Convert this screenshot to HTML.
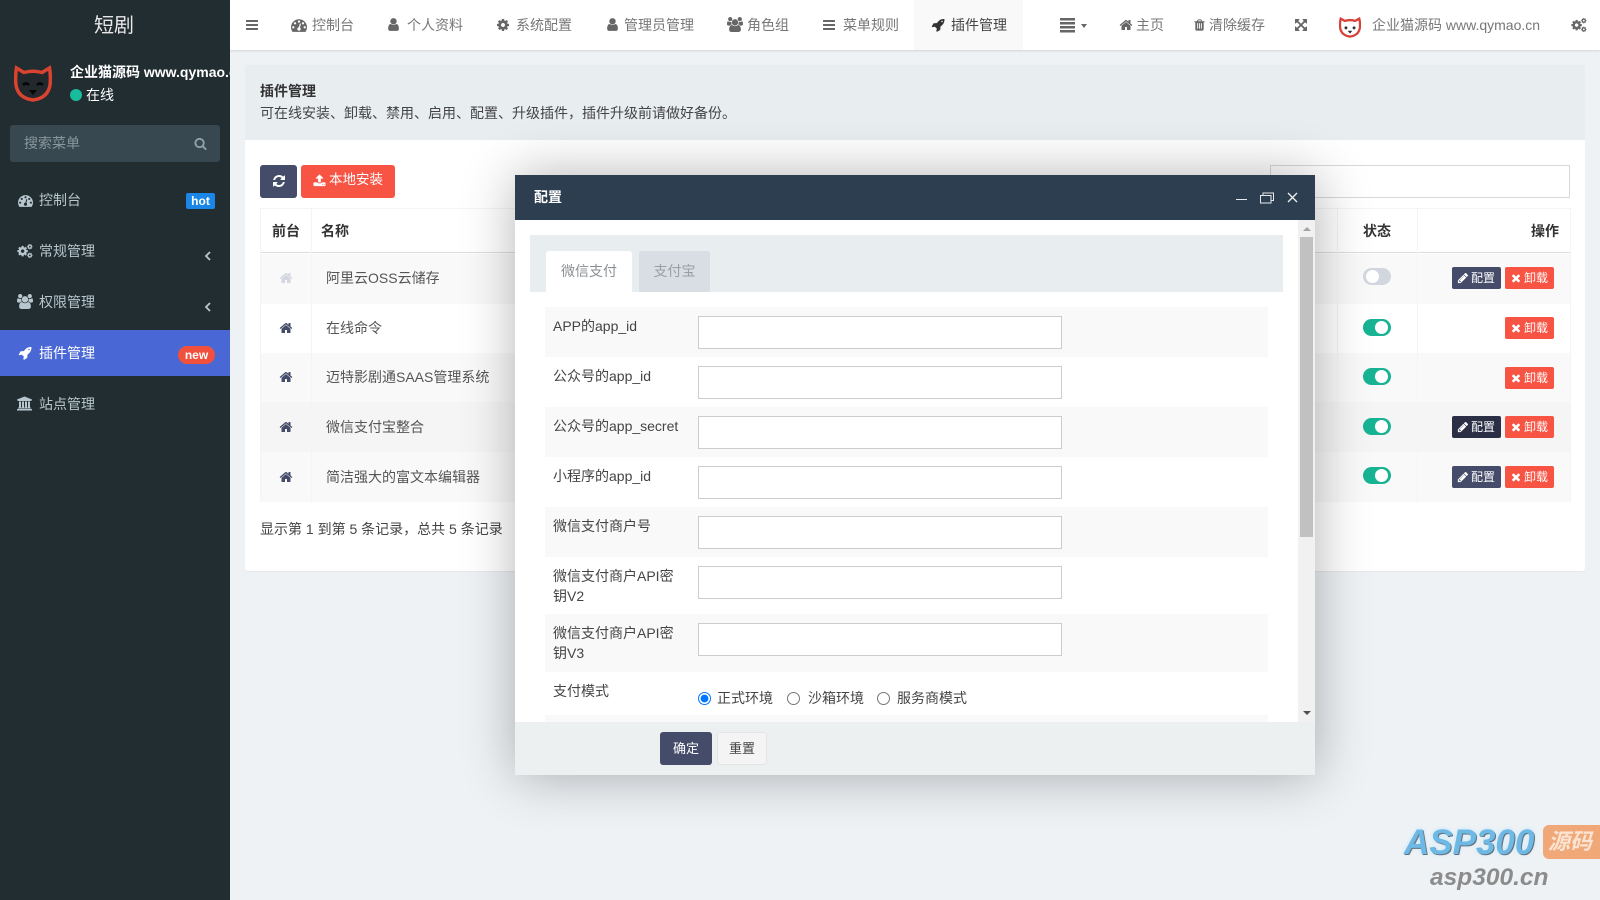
<!DOCTYPE html>
<html lang="zh-CN"><head><meta charset="utf-8"><title>插件管理</title>
<style>
html,body{margin:0;padding:0;width:1600px;height:900px;overflow:hidden;background:#eef2f5}
body{position:relative;font:14px/20px "Liberation Sans","Noto Sans CJK SC",sans-serif;color:#444}
.a{position:absolute}
.t{position:absolute;white-space:nowrap;line-height:20px}
svg.i{position:absolute;fill:currentColor;display:block}
.nav{color:#777}
.side{color:#b8c7ce}
.row{position:absolute;left:260px;width:1310px}
.hl{background:#f9f9f9}
.vl{position:absolute;width:1px;background:#f4f4f4}
.btn{position:absolute;height:22px;width:49px;border-radius:2px;color:#fff;font-size:12px;line-height:22px;white-space:nowrap}
.btn svg{position:absolute}
.btn span{position:absolute;left:19px;top:0}
.cfg{background:#444c69;left:1452px}
.del{background:#f75444;left:1505px}
.sw{position:absolute;left:1363px;width:28px;height:17px;border-radius:9px;background:#18b393}
.sw:after{content:"";position:absolute;left:12px;top:2px;width:13px;height:13px;border-radius:50%;background:#fff}
.sw.off{background:#d2d6de}
.sw.off:after{left:3px}
.fr{position:absolute;left:30px;width:723px}
.fr.s{background:#f9f9f9}
.lb{position:absolute;left:8px;width:130px;line-height:20px;color:#444}
input.tx{position:absolute;left:153px;width:364px;height:33px;box-sizing:border-box;border:1px solid #ccc;background:#fff;margin:0;padding:0;border-radius:0}
input[type=radio]{position:absolute;margin:0;width:13px;height:13px}
</style></head><body>
<svg width="0" height="0" style="position:absolute">
<defs>
<symbol id="home" viewBox="0 0 1792 1792"><path d="M1472 992v480q0 26-19 45t-45 19h-384v-384h-256v384h-384q-26 0-45-19t-19-45v-480q0-1 .5-3t.5-3l575-474 575 474q1 2 1 6zm223-69l-62 74q-8 9-21 11h-3q-13 0-21-7l-692-577-692 577q-12 8-24 7-13-2-21-11l-62-74q-8-10-7-23.500t11-21.500l719-599q32-26 76-26t76 26l244 204v-195q0-14 9-23t23-9h192q14 0 23 9t9 23v408l219 182q10 8 11 21.500t-7 23.500z"/></symbol>
<symbol id="bars" viewBox="0 0 1792 1792"><path d="M1664 1344v128q0 26-19 45t-45 19h-1408q-26 0-45-19t-19-45v-128q0-26 19-45t45-19h1408q26 0 45 19t19 45zm0-512v128q0 26-19 45t-45 19h-1408q-26 0-45-19t-19-45v-128q0-26 19-45t45-19h1408q26 0 45 19t19 45zm0-512v128q0 26-19 45t-45 19h-1408q-26 0-45-19t-19-45v-128q0-26 19-45t45-19h1408q26 0 45 19t19 45z"/></symbol>
<symbol id="user" viewBox="0 0 1792 1792"><path d="M1536 1399q0 109-62.500 187t-150.500 78h-854q-88 0-150.500-78t-62.500-187q0-85 8.500-160.500t31.500-152 58.500-131 94-89 134.500-34.500q131 128 313 128t313-128q76 0 134.500 34.500t94 89 58.500 131 31.500 152 8.500 160.500zm-256-887q0 159-112.500 271.500t-271.500 112.500-271.500-112.500-112.500-271.500 112.500-271.500 271.500-112.500 271.500 112.500 112.500 271.500z"/></symbol>
<symbol id="rocket" viewBox="0 0 1792 1792"><path d="M1504 448q0-40-28-68t-68-28-68 28-28 68 28 68 68 28 68-28 28-68zm224-288q0 249-75.500 430.500t-253.500 360.500q-81 80-195 176l-20 379q-2 16-16 26l-384 224q-7 4-16 4-12 0-23-9l-64-64q-13-14-8-32l85-276-281-281-276 85q-3 1-9 1-14 0-23-9l-64-64q-17-19-5-39l224-384q10-14 26-16l379-20q96-114 176-195 188-187 358-258t431-71q14 0 24 9.500t10 22.500z"/></symbol>
<symbol id="search" viewBox="0 0 1792 1792"><path d="M1216 832q0-185-131.500-316.500t-316.500-131.500-316.500 131.500-131.500 316.500 131.500 316.500 316.500 131.500 316.500-131.500 131.500-316.500zm512 832q0 52-38 90t-90 38q-54 0-90-38l-343-342q-179 124-399 124-143 0-273.500-55.500t-225-150-150-225-55.500-273.500 55.500-273.500 150-225 225-150 273.500-55.500 273.500 55.500 225 150 150 225 55.500 273.500q0 220-124 399l343 343q37 37 37 90z"/></symbol>
<symbol id="pencil" viewBox="0 0 1792 1792"><path d="M491 1536l91-91-235-235-91 91v107h128v128h107zm523-928q0-22-22-22-10 0-17 7l-542 542q-7 7-7 17 0 22 22 22 10 0 17-7l542-542q7-7 7-17zm-54-192l416 416-832 832h-416v-416zm683 96q0 53-37 90l-166 166-416-416 166-165q36-38 90-38 53 0 91 38l235 234q37 39 37 91z"/></symbol>
<symbol id="times" viewBox="0 0 1792 1792"><path d="M1490 1322q0 40-28 68l-136 136q-28 28-68 28t-68-28l-294-294-294 294q-28 28-68 28t-68-28l-136-136q-28-28-28-68t28-68l294-294-294-294q-28-28-28-68t28-68l136-136q28-28 68-28t68 28l294 294 294-294q28-28 68-28t68 28l136 136q28 28 28 68t-28 68l-294 294 294 294q28 28 28 68z"/></symbol>
<symbol id="trash" viewBox="0 0 1792 1792"><path d="M704 1376v-704q0-14-9-23t-23-9h-64q-14 0-23 9t-9 23v704q0 14 9 23t23 9h64q14 0 23-9t9-23zm256 0v-704q0-14-9-23t-23-9h-64q-14 0-23 9t-9 23v704q0 14 9 23t23 9h64q14 0 23-9t9-23zm256 0v-704q0-14-9-23t-23-9h-64q-14 0-23 9t-9 23v704q0 14 9 23t23 9h64q14 0 23-9t9-23zm-544-992h448l-48-117q-7-9-17-11h-317q-10 2-17 11zm928 32v64q0 14-9 23t-23 9h-96v948q0 83-47 143.500t-113 60.500h-832q-66 0-113-58.500t-47-141.500v-952h-96q-14 0-23-9t-9-23v-64q0-14 9-23t23-9h309l70-167q15-37 54-63t79-26h320q40 0 79 26t54 63l70 167h309q14 0 23 9t9 23z"/></symbol>
<symbol id="upload" viewBox="0 0 1792 1792"><path d="M1344 1472q0-26-19-45t-45-19-45 19-19 45 19 45 45 19 45-19 19-45zm256 0q0-26-19-45t-45-19-45 19-19 45 19 45 45 19 45-19 19-45zm128-224v320q0 40-28 68t-68 28h-1472q-40 0-68-28t-28-68v-320q0-40 28-68t68-28h427q21 56 70.500 92t110.500 36h256q61 0 110.500-36t70.500-92h427q40 0 68 28t28 68zm-325-648q-17 40-59 40h-256v448q0 26-19 45t-45 19h-256q-26 0-45-19t-19-45v-448h-256q-42 0-59-40-17-39 14-69l448-448q18-19 45-19t45 19l448 448q31 30 14 69z"/></symbol>
<symbol id="refresh" viewBox="0 0 1792 1792"><path d="M1639 1056q0 5-1 7-64 268-268 434.500t-478 166.500q-146 0-282.500-55t-243.500-157l-129 129q-19 19-45 19t-45-19-19-45v-448q0-26 19-45t45-19h448q26 0 45 19t19 45-19 45l-137 137q71 66 161 102t187 36q134 0 250-65t186-179q11-17 53-117 8-23 30-23h192q13 0 22.500 9.500t9.500 22.500zm25-800v448q0 26-19 45t-45 19h-448q-26 0-45-19t-19-45 19-45l138-138q-148-137-349-137-134 0-250 65t-186 179q-11 17-53 117-8 23-30 23h-199q-13 0-22.500-9.500t-9.500-22.500v-7q65-268 270-434.500t480-166.500q146 0 284 55.500t245 156.500l130-129q19-19 45-19t45 19 19 45z"/></symbol>
<symbol id="cog" viewBox="0 0 1792 1792"><path d="M1152 896q0-106-75-181t-181-75-181 75-75 181 75 181 181 75 181-75 75-181zm512-109v222q0 12-8 23t-20 13l-185 28q-19 54-39 91 35 50 107 138 10 12 10 25t-9 23q-27 37-99 108t-94 71q-12 0-26-9l-138-108q-44 23-91 38-16 136-29 186-7 28-36 28h-222q-14 0-24.500-8.500t-11.500-21.500l-28-184q-49-16-90-37l-141 107q-10 9-25 9-14 0-25-11-126-114-165-168-7-10-7-23 0-12 8-23 15-21 51-66.500t54-70.500q-27-50-41-99l-183-27q-13-2-21-12.500t-8-23.500v-222q0-12 8-23t19-13l186-28q14-46 39-92-40-57-107-138-10-12-10-24 0-10 9-23 26-36 98.500-107.500t94.500-71.500q13 0 26 10l138 107q44-23 91-38 16-136 29-186 7-28 36-28h222q14 0 24.500 8.500t11.500 21.500l28 184q49 16 90 37l142-107q9-9 24-9 13 0 25 10 129 119 165 170 7 8 7 22 0 12-8 23-15 21-51 66.500t-54 70.500q26 50 41 98l183 28q13 2 21 12.500t8 23.500z"/></symbol>
<symbol id="cogs" viewBox="0 0 1920 1792"><g transform="translate(-60 180) scale(.82)"><path d="M1152 896q0-106-75-181t-181-75-181 75-75 181 75 181 181 75 181-75 75-181zm512-109v222q0 12-8 23t-20 13l-185 28q-19 54-39 91 35 50 107 138 10 12 10 25t-9 23q-27 37-99 108t-94 71q-12 0-26-9l-138-108q-44 23-91 38-16 136-29 186-7 28-36 28h-222q-14 0-24.500-8.500t-11.500-21.500l-28-184q-49-16-90-37l-141 107q-10 9-25 9-14 0-25-11-126-114-165-168-7-10-7-23 0-12 8-23 15-21 51-66.500t54-70.500q-27-50-41-99l-183-27q-13-2-21-12.500t-8-23.500v-222q0-12 8-23t19-13l186-28q14-46 39-92-40-57-107-138-10-12-10-24 0-10 9-23 26-36 98.500-107.500t94.500-71.500q13 0 26 10l138 107q44-23 91-38 16-136 29-186 7-28 36-28h222q14 0 24.500 8.500t11.500 21.500l28 184q49 16 90 37l142-107q9-9 24-9 13 0 25 10 129 119 165 170 7 8 7 22 0 12-8 23-15 21-51 66.500t-54 70.500q26 50 41 98l183 28q13 2 21 12.500t8 23.500z"/></g><g transform="translate(1160 0) scale(.42)"><path d="M1152 896q0-106-75-181t-181-75-181 75-75 181 75 181 181 75 181-75 75-181zm512-109v222q0 12-8 23t-20 13l-185 28q-19 54-39 91 35 50 107 138 10 12 10 25t-9 23q-27 37-99 108t-94 71q-12 0-26-9l-138-108q-44 23-91 38-16 136-29 186-7 28-36 28h-222q-14 0-24.500-8.500t-11.500-21.500l-28-184q-49-16-90-37l-141 107q-10 9-25 9-14 0-25-11-126-114-165-168-7-10-7-23 0-12 8-23 15-21 51-66.500t54-70.500q-27-50-41-99l-183-27q-13-2-21-12.500t-8-23.500v-222q0-12 8-23t19-13l186-28q14-46 39-92-40-57-107-138-10-12-10-24 0-10 9-23 26-36 98.500-107.500t94.500-71.500q13 0 26 10l138 107q44-23 91-38 16-136 29-186 7-28 36-28h222q14 0 24.500 8.500t11.500 21.500l28 184q49 16 90 37l142-107q9-9 24-9 13 0 25 10 129 119 165 170 7 8 7 22 0 12-8 23-15 21-51 66.500t-54 70.500q26 50 41 98l183 28q13 2 21 12.500t8 23.500z"/></g><g transform="translate(1160 1040) scale(.42)"><path d="M1152 896q0-106-75-181t-181-75-181 75-75 181 75 181 181 75 181-75 75-181zm512-109v222q0 12-8 23t-20 13l-185 28q-19 54-39 91 35 50 107 138 10 12 10 25t-9 23q-27 37-99 108t-94 71q-12 0-26-9l-138-108q-44 23-91 38-16 136-29 186-7 28-36 28h-222q-14 0-24.500-8.500t-11.500-21.500l-28-184q-49-16-90-37l-141 107q-10 9-25 9-14 0-25-11-126-114-165-168-7-10-7-23 0-12 8-23 15-21 51-66.500t54-70.500q-27-50-41-99l-183-27q-13-2-21-12.500t-8-23.500v-222q0-12 8-23t19-13l186-28q14-46 39-92-40-57-107-138-10-12-10-24 0-10 9-23 26-36 98.500-107.500t94.500-71.500q13 0 26 10l138 107q44-23 91-38 16-136 29-186 7-28 36-28h222q14 0 24.500 8.500t11.500 21.500l28 184q49 16 90 37l142-107q9-9 24-9 13 0 25 10 129 119 165 170 7 8 7 22 0 12-8 23-15 21-51 66.500t-54 70.500q26 50 41 98l183 28q13 2 21 12.500t8 23.500z"/></g></symbol>
<symbol id="users" viewBox="0 0 1920 1792"><path d="M593 896q-162 5-265 128h-134q-82 0-138-40.500t-56-118.500q0-353 124-353 6 0 43.500 21t97.500 42.500 119 21.500q67 0 133-23-5 37-5 66 0 139 81 256zm1071 637q0 120-73 189.500t-194 69.500h-874q-121 0-194-69.500t-73-189.500q0-53 3.500-103.500t14-109 26.500-108.500 43-97.500 62-81 85.500-53.500 111.500-20q10 0 43 21.500t73 48 107 48 135 21.500 135-21.500 107-48 73-48 43-21.500q61 0 111.500 20t85.500 53.500 62 81 43 97.500 26.500 108.500 14 109 3.500 103.500zm-1024-1277q0 106-75 181t-181 75-181-75-75-181 75-181 181-75 181 75 75 181zm704 384q0 159-112.500 271.500t-271.500 112.500-271.500-112.500-112.500-271.500 112.500-271.500 271.500-112.500 271.500 112.500 112.500 271.500zm576 225q0 78-56 118.500t-138 40.500h-134q-103-123-265-128 81-117 81-256 0-29-5-66 66 23 133 23 59 0 119-21.500t97.500-42.500 43.500-21q124 0 124 353zm-128-609q0 106-75 181t-181 75-181-75-75-181 75-181 181-75 181 75 75 181z"/></symbol>
<symbol id="dash" viewBox="0 0 1792 1792"><path d="M384 1152q0-53-37.500-90.500t-90.500-37.500-90.500 37.500-37.500 90.500 37.500 90.500 90.500 37.500 90.500-37.500 37.500-90.500zm192-448q0-53-37.500-90.500t-90.500-37.500-90.500 37.500-37.500 90.500 37.500 90.500 90.500 37.500 90.500-37.500 37.500-90.500zm428 481l101-382q6-26-7.500-48.500t-38.500-29.500-48 6.500-30 39.500l-101 382q-60 5-107 43.500t-63 98.500q-20 77 20 146t117 89 146-20 89-117q16-60-6-117t-72-91zm660-33q0-53-37.500-90.500t-90.500-37.500-90.500 37.500-37.500 90.500 37.500 90.500 90.500 37.500 90.500-37.500 37.500-90.500zm-640-640q0-53-37.500-90.500t-90.500-37.500-90.500 37.500-37.500 90.500 37.500 90.500 90.500 37.500 90.500-37.500 37.500-90.500zm448 192q0-53-37.500-90.500t-90.500-37.500-90.500 37.500-37.500 90.500 37.500 90.500 90.500 37.500 90.500-37.500 37.500-90.500zm320 448q0 261-141 483-19 29-54 29h-1402q-35 0-54-29-141-221-141-483 0-182 71-348t191-286 286-191 348-71 348 71 286 191 191 286 71 348z"/></symbol>
<symbol id="bank" viewBox="0 0 1920 1792"><path d="M960 0l960 384v128h-128q0 26-20.500 45t-48.500 19h-1526q-28 0-48.500-19t-20.500-45h-128v-128zm-704 640h256v768h128v-768h256v768h128v-768h256v768h128v-768h256v768h59q28 0 48.500 19t20.500 45v64h-1664v-64q0-26 20.500-45t48.500-19h59v-768zm1595 960q28 0 48.500 19t20.500 45v128h-1920v-128q0-26 20.500-45t48.500-19h1782z"/></symbol>
<symbol id="expand" viewBox="0 0 1792 1792"><path d="M1411 541l-355 355 355 355 144-144q29-31 70-14 39 17 39 59v448q0 26-19 45t-45 19h-448q-42 0-59-40-17-39 14-69l144-144-355-355-355 355 144 144q31 30 14 69-17 40-59 40h-448q-26 0-45-19t-19-45v-448q0-42 40-59 39-17 69 14l144 144 355-355-355-355-144 144q-19 19-45 19-12 0-24-5-40-17-40-59v-448q0-26 19-45t45-19h448q42 0 59 40 17 39-14 69l-144 144 355 355 355-355-144-144q-31-30-14-69 17-40 59-40h448q26 0 45 19t19 45v448q0 42-39 59-13 5-25 5-26 0-45-19z"/></symbol>
</defs></svg>

<!-- content -->
<div class="a" style="left:230px;top:0;width:1370px;height:50px;background:#fff;box-shadow:0 1px 2px rgba(0,0,0,.12)"></div>
<div class="a" style="left:914px;top:0;width:109px;height:50px;background:#f9f9f9"></div>
<div class="a" style="left:245px;top:65px;width:1340px;height:75px;background:#e8edf0"></div>
<div class="a" style="left:245px;top:140px;width:1340px;height:431px;background:#fff;border-radius:0 0 3px 3px;box-shadow:0 1px 1px rgba(0,0,0,.04)"></div>

<!-- top nav -->
<div class="nav">
<svg class="i" style="left:245px;top:18px;color:#666" width="14" height="14"><use href="#bars"/></svg>
<svg class="i" style="left:291px;top:17px;color:#666" width="16" height="16"><use href="#dash"/></svg><span class="t" style="left:312px;top:15px">控制台</span>
<svg class="i" style="left:386px;top:17px;color:#666" width="15" height="15"><use href="#user"/></svg><span class="t" style="left:407px;top:15px">个人资料</span>
<svg class="i" style="left:496px;top:18px;color:#666" width="14" height="14"><use href="#cog"/></svg><span class="t" style="left:516px;top:15px">系统配置</span>
<svg class="i" style="left:605px;top:17px;color:#666" width="15" height="15"><use href="#user"/></svg><span class="t" style="left:624px;top:15px">管理员管理</span>
<svg class="i" style="left:727px;top:17px;color:#666" width="16" height="15"><use href="#users"/></svg><span class="t" style="left:747px;top:15px">角色组</span>
<svg class="i" style="left:822px;top:18px;color:#666" width="14" height="14"><use href="#bars"/></svg><span class="t" style="left:843px;top:15px">菜单规则</span>
<svg class="i" style="left:931px;top:18px;color:#333" width="14" height="14"><use href="#rocket"/></svg><span class="t" style="left:951px;top:15px;color:#444">插件管理</span>
<svg class="i" style="left:1060px;top:17px;color:#666" width="15" height="16" viewBox="0 0 15 16"><path d="M0 1h15v2.500H0zM0 5h15v2.500H0zM0 9h15v2.500H0zM0 13h15v2.500H0z"/></svg>
<div class="a" style="left:1081px;top:24px;border:3.500px solid transparent;border-top:4px solid #666;border-bottom:0"></div>
<svg class="i" style="left:1119px;top:18px;color:#666" width="14" height="14"><use href="#home"/></svg><span class="t" style="left:1136px;top:15px">主页</span>
<svg class="i" style="left:1193px;top:18px;color:#666" width="13" height="14"><use href="#trash"/></svg><span class="t" style="left:1209px;top:15px">清除缓存</span>
<svg class="i" style="left:1294px;top:18px;color:#666" width="14" height="14"><use href="#expand"/></svg>
<svg class="a" style="left:1339px;top:16px" width="22" height="22" viewBox="0 0 38 37"><path d="M3 4L10 8Q19 5 28 8L35 4Q37 12 36 20Q34 33 19 35Q4 33 2 20Q1 12 3 4Z" fill="#fff" stroke="#d9423a" stroke-width="4"/><circle cx="12" cy="20" r="2.500" fill="#333"/><circle cx="26" cy="20" r="2.500" fill="#333"/><path d="M15 25h8l-4 5z" fill="#333"/></svg>
<span class="t" style="left:1372px;top:15px">企业猫源码 www.qymao.cn</span>
<svg class="i" style="left:1571px;top:17px;color:#666" width="16" height="16"><use href="#cogs"/></svg>
</div>

<!-- sidebar -->
<div class="a" style="left:0;top:0;width:230px;height:900px;background:#222d32;overflow:hidden">
<span class="t" style="left:0;width:228px;text-align:center;top:14px;line-height:24px;font-size:20px;color:#e8e8e8">短剧</span>
<svg class="a" style="left:14px;top:65px" width="38" height="37" viewBox="0 0 38 37"><path d="M2.500 3L10 7.500Q19 5 28 7.500L35.500 3Q37 12 36 20Q34 33 19 35Q4 33 2 20Q1 12 2.500 3Z" fill="#23282c" stroke="#d9432f" stroke-width="3.500"/><path d="M9 20q3-3 6 0M23 20q3-3 6 0" fill="none" stroke="#060608" stroke-width="2.500"/><path d="M15 25h8l-4 5z" fill="#060608"/></svg>
<span class="t" style="left:70px;top:62px;font-weight:bold;color:#fff">企业猫源码 www.qymao.cn</span>
<div class="a" style="left:70px;top:89px;width:12px;height:12px;border-radius:50%;background:#18bc9c"></div>
<span class="t" style="left:86px;top:85px;color:#fff">在线</span>
<div class="a" style="left:10px;top:125px;width:210px;height:37px;background:#374850;border-radius:3px"></div>
<span class="t" style="left:24px;top:133px;color:#8a979d">搜索菜单</span>
<svg class="i" style="left:194px;top:137px;color:#92a0a7" width="13" height="13"><use href="#search"/></svg>

<div class="a" style="left:0;top:330px;width:230px;height:46px;background:#4a67d6"></div>
<div class="side">
<svg class="i" style="left:18px;top:193px;color:#b8c7ce" width="15" height="15"><use href="#dash"/></svg><span class="t" style="left:39px;top:190px">控制台</span>
<svg class="i" style="left:17px;top:243px;color:#b8c7ce" width="16" height="16"><use href="#cogs"/></svg><span class="t" style="left:39px;top:241px">常规管理</span>
<svg class="i" style="left:17px;top:294px;color:#b8c7ce" width="16" height="15"><use href="#users"/></svg><span class="t" style="left:39px;top:292px">权限管理</span>
<svg class="i" style="left:18px;top:346px;color:#fff" width="14" height="14"><use href="#rocket"/></svg><span class="t" style="left:39px;top:343px;color:#fff">插件管理</span>
<svg class="i" style="left:17px;top:396px;color:#b8c7ce" width="15" height="15"><use href="#bank"/></svg><span class="t" style="left:39px;top:394px">站点管理</span>
</div>
<svg class="a" style="left:204px;top:251px" width="8" height="10" viewBox="0 0 8 10"><path d="M6 1L2 5l4 4" fill="none" stroke="#b8c7ce" stroke-width="1.800"/></svg>
<svg class="a" style="left:204px;top:302px" width="8" height="10" viewBox="0 0 8 10"><path d="M6 1L2 5l4 4" fill="none" stroke="#b8c7ce" stroke-width="1.800"/></svg>
<div class="a" style="left:186px;top:193px;width:29px;height:16px;background:#1a86e8;border-radius:2px;color:#fff;font-size:12px;font-weight:bold;line-height:16px;text-align:center">hot</div>
<div class="a" style="left:178px;top:346px;width:37px;height:18px;background:#f0503c;border-radius:9px;color:#fff;font-size:12px;font-weight:bold;line-height:18px;text-align:center">new</div>
</div>

<!-- panel -->
<span class="t" style="left:260px;top:81px;font-weight:bold;color:#333">插件管理</span>
<span class="t" style="left:260px;top:103px;color:#444">可在线安装、卸载、禁用、启用、配置、升级插件，插件升级前请做好备份。</span>

<div class="a" style="left:260px;top:165px;width:37px;height:33px;background:#444c69;border-radius:3px"></div>
<svg class="i" style="left:272px;top:174px;color:#fff" width="14" height="14"><use href="#refresh"/></svg>
<div class="a" style="left:301px;top:165px;width:94px;height:33px;background:#f75444;border-radius:3px"></div>
<svg class="i" style="left:313px;top:174px;color:#fff" width="13" height="13"><use href="#upload"/></svg>
<span class="t" style="left:329px;top:170px;color:#fff;font-size:13.500px">本地安装</span>
<div class="a" style="left:1270px;top:165px;width:300px;height:33px;box-sizing:border-box;border:1px solid #d8d8d8"></div>

<!-- table -->
<div class="row" style="top:208px;height:43px;border-top:1px solid #f4f4f4;border-bottom:1px solid #ddd"></div>
<div class="row hl" style="top:254px;height:50px"></div>
<div class="row" style="top:304px;height:49px"></div>
<div class="row hl" style="top:353px;height:49px"></div>
<div class="row" style="top:402px;height:50px;background:#f5f5f5"></div>
<div class="row hl" style="top:452px;height:50px"></div>
<div class="vl" style="left:260px;top:208px;height:294px"></div>
<div class="vl" style="left:311px;top:208px;height:294px"></div>
<div class="vl" style="left:1337px;top:208px;height:294px"></div>
<div class="vl" style="left:1417px;top:208px;height:294px"></div>
<div class="vl" style="left:1570px;top:208px;height:294px"></div>
<span class="t" style="left:272px;top:221px;font-weight:bold;color:#333">前台</span>
<span class="t" style="left:321px;top:221px;font-weight:bold;color:#333">名称</span>
<span class="t" style="left:1363px;top:221px;font-weight:bold;color:#333">状态</span>
<span class="t" style="left:1531px;top:221px;font-weight:bold;color:#333">操作</span>

<svg class="i" style="left:279px;top:271px;color:#d2d6de" width="14" height="14"><use href="#home"/></svg>
<svg class="i" style="left:279px;top:321px;color:#444c69" width="14" height="14"><use href="#home"/></svg>
<svg class="i" style="left:279px;top:370px;color:#444c69" width="14" height="14"><use href="#home"/></svg>
<svg class="i" style="left:279px;top:420px;color:#444c69" width="14" height="14"><use href="#home"/></svg>
<svg class="i" style="left:279px;top:470px;color:#444c69" width="14" height="14"><use href="#home"/></svg>
<span class="t" style="left:326px;top:268px;color:#555">阿里云OSS云储存</span>
<span class="t" style="left:326px;top:318px;color:#555">在线命令</span>
<span class="t" style="left:326px;top:367px;color:#555">迈特影剧通SAAS管理系统</span>
<span class="t" style="left:326px;top:417px;color:#555">微信支付宝整合</span>
<span class="t" style="left:326px;top:467px;color:#555">简洁强大的富文本编辑器</span>
<span class="t" style="left:260px;top:519px;color:#444">显示第 1 到第 5 条记录，总共 5 条记录</span>

<div class="sw off" style="top:268px"></div>
<div class="sw" style="top:319px"></div>
<div class="sw" style="top:368px"></div>
<div class="sw" style="top:418px"></div>
<div class="sw" style="top:467px"></div>

<div class="btn cfg" style="top:267px"><svg class="i" style="left:5px;top:5px;color:#fff" width="12" height="12"><use href="#pencil"/></svg><span>配置</span></div>
<div class="btn del" style="top:267px"><svg class="i" style="left:5px;top:5px;color:#fff" width="12" height="12"><use href="#times"/></svg><span>卸载</span></div>
<div class="btn del" style="top:317px"><svg class="i" style="left:5px;top:5px;color:#fff" width="12" height="12"><use href="#times"/></svg><span>卸载</span></div>
<div class="btn del" style="top:367px"><svg class="i" style="left:5px;top:5px;color:#fff" width="12" height="12"><use href="#times"/></svg><span>卸载</span></div>
<div class="btn cfg" style="top:416px;background:#2a2f45"><svg class="i" style="left:5px;top:5px;color:#fff" width="12" height="12"><use href="#pencil"/></svg><span>配置</span></div>
<div class="btn del" style="top:416px"><svg class="i" style="left:5px;top:5px;color:#fff" width="12" height="12"><use href="#times"/></svg><span>卸载</span></div>
<div class="btn cfg" style="top:466px"><svg class="i" style="left:5px;top:5px;color:#fff" width="12" height="12"><use href="#pencil"/></svg><span>配置</span></div>
<div class="btn del" style="top:466px"><svg class="i" style="left:5px;top:5px;color:#fff" width="12" height="12"><use href="#times"/></svg><span>卸载</span></div>

<!-- modal -->
<div class="a" style="left:515px;top:175px;width:800px;height:600px;background:#fff;box-shadow:1px 1px 50px rgba(0,0,0,.3);overflow:hidden">
  <div class="a" style="left:0;top:0;width:800px;height:45px;background:#2c3e50"></div>
  <span class="t" style="left:19px;top:12px;color:#fff;font-weight:bold">配置</span>
  <div class="a" style="left:721px;top:24px;width:11px;height:1px;background:#e6e9ec"></div>
  <svg class="a" style="left:745px;top:17px" width="14" height="12" viewBox="0 0 14 12"><path d="M.5 3.500h10.500v7.500H.5zM3 3.500V1h10.500v7.500H11" fill="none" stroke="#e6e9ec"/></svg>
  <svg class="a" style="left:772px;top:17px" width="11" height="11" viewBox="0 0 11 11"><path d="M1 1l9 9M10 1l-9 9" stroke="#eef0f2" stroke-width="1.300"/></svg>

  <!-- tabs -->
  <div class="a" style="left:15px;top:60px;width:753px;height:57px;background:#e8edf0"></div>
  <div class="a" style="left:31px;top:76px;width:86px;height:41px;background:#fff;border-radius:3px 3px 0 0;color:#8a8f94;line-height:41px;text-align:center">微信支付</div>
  <div class="a" style="left:124px;top:76px;width:71px;height:41px;background:#d9dee4;border-radius:3px 3px 0 0;color:#9a9fa5;line-height:41px;text-align:center">支付宝</div>

  <!-- form -->
  <div class="fr s" style="top:132px;height:50px"><span class="lb" style="top:9px">APP的app_id</span><input class="tx" style="top:9px"></div>
  <div class="fr" style="top:182px;height:50px"><span class="lb" style="top:9px">公众号的app_id</span><input class="tx" style="top:9px"></div>
  <div class="fr s" style="top:232px;height:50px"><span class="lb" style="top:9px">公众号的app_secret</span><input class="tx" style="top:9px"></div>
  <div class="fr" style="top:282px;height:50px"><span class="lb" style="top:9px">小程序的app_id</span><input class="tx" style="top:9px"></div>
  <div class="fr s" style="top:332px;height:50px"><span class="lb" style="top:9px">微信支付商户号</span><input class="tx" style="top:9px"></div>
  <div class="fr" style="top:382px;height:57px"><span class="lb" style="top:9px">微信支付商户API密钥V2</span><input class="tx" style="top:9px"></div>
  <div class="fr s" style="top:439px;height:58px"><span class="lb" style="top:9px">微信支付商户API密钥V3</span><input class="tx" style="top:9px"></div>
  <div class="fr" style="top:497px;height:43px"><span class="lb" style="top:9px">支付模式</span></div>
  <div class="fr s" style="top:540px;height:7px"></div>
  <input type="radio" name="m" checked style="left:183px;top:517px">
  <span class="t" style="left:202px;top:513px;color:#444">正式环境</span>
  <input type="radio" name="m" style="left:272px;top:517px">
  <span class="t" style="left:293px;top:513px;color:#444">沙箱环境</span>
  <input type="radio" name="m" style="left:362px;top:517px">
  <span class="t" style="left:382px;top:513px;color:#444">服务商模式</span>

  <!-- scrollbar -->
  <div class="a" style="left:783px;top:45px;width:17px;height:502px;background:#f1f1f1"></div>
  <div class="a" style="left:785px;top:62px;width:13px;height:300px;background:#c1c1c1"></div>
  <div class="a" style="left:788px;top:52px;border:4px solid transparent;border-bottom:4px solid #a3a3a3;border-top:0"></div>
  <div class="a" style="left:788px;top:536px;border:4px solid transparent;border-top:4px solid #505050;border-bottom:0"></div>

  <!-- footer -->
  <div class="a" style="left:0;top:547px;width:800px;height:53px;background:#ecf0f1"></div>
  <div class="a" style="left:145px;top:557px;width:52px;height:33px;background:#444c69;border-radius:3px;color:#fff;line-height:33px;text-align:center;font-size:13px">确定</div>
  <div class="a" style="left:202px;top:557px;width:50px;height:33px;box-sizing:border-box;background:#f4f4f4;border:1px solid #e4e4e4;border-radius:3px;color:#444;line-height:31px;text-align:center;font-size:13px">重置</div>
</div>

<!-- watermark -->
<span class="t" style="left:1404px;top:823px;line-height:40px;font-size:35px;font-style:italic;font-weight:bold;color:#6db8e4;text-shadow:1px 1px 0 #67727c,0 0 5px #bfe6fa">ASP300</span>
<div class="a" style="left:1543px;top:825px;width:60px;height:34px;background:#f0a878;border-radius:6px 0 0 6px"></div>
<span class="t" style="left:1548px;top:829px;line-height:26px;font-size:22px;font-style:italic;font-weight:bold;color:#fbe3d2">源码</span>
<span class="t" style="left:1430px;top:863px;line-height:30px;font-size:24.500px;font-style:italic;font-weight:bold;color:#8c8c8c">asp300.cn</span>
</body></html>
